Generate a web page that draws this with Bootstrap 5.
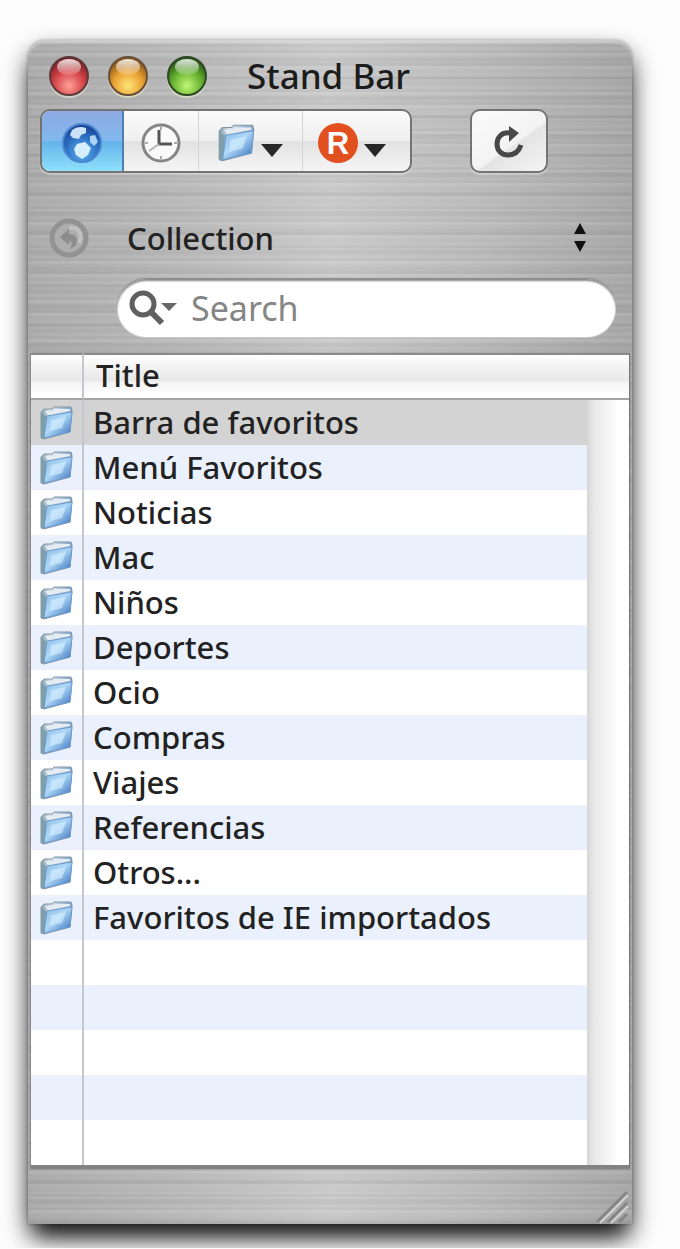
<!DOCTYPE html>
<html lang="es">
<head>
<meta charset="utf-8">
<meta name="viewport" content="width=device-width, initial-scale=1">
<title>Stand Bar</title>
<link href="https://cdn.jsdelivr.net/npm/bootstrap@5.3.0/dist/css/bootstrap.min.css" rel="stylesheet">
<style>
  body { background: #fdfdfd; font-family: "Noto Sans", "Open Sans", sans-serif; font-size: 31px; font-weight: 500; line-height: 40px; color: #222; padding: 40px 48px 24px 28px; }
  .metal {
    border-radius: 16px 16px 0 0;
    padding: 0 3px;
    background:
      repeating-linear-gradient(180deg, rgba(255,255,255,.07) 0 2px, rgba(0,0,0,.01) 4px 6px, rgba(255,255,255,.04) 9px, rgba(0,0,0,.03) 11px 13px),
      repeating-linear-gradient(180deg, rgba(0,0,0,.03) 0 1px, rgba(255,255,255,.04) 8px 17px, rgba(0,0,0,.02) 19px),
      linear-gradient(90deg, #aaa, #b8b8b8 25%, #c9c9c9 50%, #bababa 75%, #a6a6a6);
    box-shadow: inset 0 3px 3px rgba(255,255,255,.5), inset 0 0 3px rgba(0,0,0,.3), 0 0 3px rgba(0,0,0,.3), 0 12px 26px rgba(0,0,0,.6), 0 18px 22px -8px rgba(0,0,0,.8);
  }
  .titlebar { height: 69px; padding: 2px 20px 0 16px; }
  .lights { gap: 15px; margin-right: 38px; }
  .light { width: 44px; height: 44px; padding: 0; border: 0; background: none; display: block; }
  .window-title { font-size: 35px; line-height: 40px; font-weight: 500; margin: 0; color: #1c1c1c; }
  .tools { padding: 0 81px 0 9px; }
  .segments, .reload { height: 64px; border: 2px solid #747474; border-radius: 10px; overflow: hidden; box-shadow: 0 2px 1px rgba(255,255,255,.35);
    background: linear-gradient(180deg, #fafafa, #efefef 50%, #e2e2e2 51%, #f5f5f5); }
  .segments { width: 372px; }
  .segments button, .reload { padding: 4px 0 0; display: flex; align-items: center; justify-content: center; }
  .segments button { border: 0; background: none; height: 100%; }
  .segments button + button { border-left: 1px solid #d6d4d2; }
  .segments .seg-web { width: 80px; background: linear-gradient(180deg, #8fa9e3, #7fbaee 50%, #63b2ea 51%, #8fe0fb); }
  .segments .seg-history { width: 76px; border-left: 2px solid #4f7fb0; }
  .segments .seg-folder { width: 104px; gap: 4px; }
  .segments .seg-r { flex: 1; gap: 4px; padding-right: 10px; }
  .reload { width: 78px; background: linear-gradient(145deg, #fbfbfb, #f3f3f3 55%, #e4e4e4 58%, #f4f4f4); }
  .drop { margin-top: 14px; }
  .collection { height: 82px; margin-top: 24px; padding: 0 40px 0 17px; }
  .collection select { appearance: none; border: 0; background: none; padding: 0; margin-left: 37px; color: #222; font-weight: 500; }
  .search-row { padding: 0 13px 16px 86px; }
  .search { height: 58px; border-radius: 29px; background: #fff; padding: 0 24px 0 12px; box-shadow: inset 0 2px 2px #888, 0 -1px 1px #8a8a8a, 0 1px 1px #ccc; }
  .search input { border: 0; background: none; min-width: 0; flex: 1; padding: 0; margin-left: 14px; outline: 0; color: #222; font-size: 34px; line-height: 40px; }
  .search input::placeholder { color: #858585; opacity: 1; }
  .bookmarks { width: 100%; table-layout: fixed; border-collapse: separate; border-spacing: 0; background: #fff; border-bottom: 4px solid #828282; box-shadow: 1px 0 1px #777, -1px 0 1px #888; }
  .bookmarks th { height: 47px; padding: 0 0 4px 12px; font-weight: 500; line-height: 36px; border-top: 2px solid #8b8b8b; border-bottom: 2px solid #a5a5a5; background: linear-gradient(180deg, #fff, #f0f0f0 35%, #e8e8e8 60%, #f3f3f3 62%, #fff 95%); }
  .bookmarks td { height: 45px; padding: 0 0 2px; line-height: 40px; }
  .bookmarks .icon-col { border-right: 2px solid #c4c8cc; padding: 0 0 0 9px; }
  .bookmarks .name { padding-left: 9px; }
  .bookmarks tbody tr:nth-child(even) td { background: #eaf1fc; }
  .bookmarks tbody tr.chosen td { background: #d3d3d3; }
  .bookmarks td svg { display: block; }
  .bookmarks tbody tr td.track { background: linear-gradient(90deg, #d5d5d5, #e7e7e7 15%, #f3f3f3 45%, #fff 75%); }
  .bookmarks .icon-width { width: 53px; }
  .bookmarks .track-width { width: 42px; }
  .statusbar { height: 55px; }
</style>
</head>
<body>
<svg width="0" height="0" class="position-absolute" aria-hidden="true">
  <defs>
    <linearGradient id="gFront" x1="0" y1="0" x2="1" y2="1"><stop offset="0" stop-color="#8dbbe6"/><stop offset=".45" stop-color="#aed8f8"/><stop offset="1" stop-color="#2f66b5"/></linearGradient>
    <linearGradient id="gBack" x1="0" y1="0" x2="1" y2="0"><stop offset="0" stop-color="#7f9fae"/><stop offset=".3" stop-color="#dbe5ec"/><stop offset="1" stop-color="#7ba2cb"/></linearGradient>
    <radialGradient id="gGlobe" cx=".5" cy=".75" r=".75"><stop offset="0" stop-color="#62b5f0"/><stop offset=".55" stop-color="#2d71c4"/><stop offset="1" stop-color="#173f92"/></radialGradient>
    <radialGradient id="gRed" cx=".5" cy=".75" r=".75"><stop offset="0" stop-color="#ffa199"/><stop offset=".5" stop-color="#d8474b"/><stop offset="1" stop-color="#6d1519"/></radialGradient>
    <radialGradient id="gAmber" cx=".5" cy=".75" r=".75"><stop offset="0" stop-color="#ffe678"/><stop offset=".5" stop-color="#eba333"/><stop offset="1" stop-color="#784510"/></radialGradient>
    <radialGradient id="gGreen" cx=".5" cy=".75" r=".75"><stop offset="0" stop-color="#c4f778"/><stop offset=".5" stop-color="#68b430"/><stop offset="1" stop-color="#1c4b0e"/></radialGradient>
    <linearGradient id="gShine" x1="0" y1="0" x2="0" y2="1"><stop offset="0" stop-color="#fff" stop-opacity=".85"/><stop offset="1" stop-color="#fff" stop-opacity=".15"/></linearGradient>
    <symbol id="folder" viewBox="0 0 34 36">
      <path d="M1 7 L4 4 L12 4 L14 2 L31 2 L32 5 L30 27 L4 34 L1 33 Z" fill="url(#gBack)" stroke="#8397a8"/>
      <path d="M1 8 L6 11 L5 33 L1 33 Z" fill="#7e9faa"/>
      <path d="M7 11 L32 7 L30 27 L4 33 Z" fill="url(#gFront)" stroke="#6d9bcb"/>
      <path d="M11 15 L26 12 L22 23 L10 26 Z" fill="#d8f0ff" opacity=".6"/>
      <path d="M5 6 L13 6 L15 4 L30 4 L30 6 L8 10 Z" fill="#e6edf2"/>
    </symbol>
  </defs>
</svg>

<main class="metal">
  <header class="titlebar d-flex align-items-center">
    <div class="lights d-flex">
      <button class="light" type="button" aria-label="Close"><svg class="d-block" width="44" height="44" viewBox="0 0 44 44"><circle cx="22" cy="24" r="20" fill="#f4f0df" opacity=".55"/><circle cx="22" cy="22" r="19" fill="url(#gRed)" stroke="#5d3a3a" stroke-width="2"/><ellipse cx="22" cy="13" rx="12" ry="8" fill="url(#gShine)"/></svg></button>
      <button class="light" type="button" aria-label="Minimize"><svg class="d-block" width="44" height="44" viewBox="0 0 44 44"><circle cx="22" cy="24" r="20" fill="#f8f2c8" opacity=".55"/><circle cx="22" cy="22" r="19" fill="url(#gAmber)" stroke="#67503a" stroke-width="2"/><ellipse cx="22" cy="13" rx="12" ry="8" fill="url(#gShine)"/></svg></button>
      <button class="light" type="button" aria-label="Zoom"><svg class="d-block" width="44" height="44" viewBox="0 0 44 44"><circle cx="22" cy="24" r="20" fill="#eaf8cc" opacity=".55"/><circle cx="22" cy="22" r="19" fill="url(#gGreen)" stroke="#304728" stroke-width="2"/><ellipse cx="22" cy="13" rx="12" ry="8" fill="url(#gShine)"/></svg></button>
    </div>
    <h1 class="window-title">Stand Bar</h1>
  </header>

  <div class="tools d-flex justify-content-between">
    <div class="segments d-flex" role="group" aria-label="View">
      <button class="seg-web" type="button" aria-label="Web">
        <svg width="42" height="42" viewBox="0 0 42 42"><circle cx="21" cy="21" r="19" fill="url(#gGlobe)" stroke="#4c86cf" stroke-width="2"/><path d="M11 8 Q17 3 25 6 L25 11 L20 13 L18 17 L12 16 L9 13 Z" fill="#c9e2f7"/><path d="M29 14 L34 13 L37 20 L33 24 L29 20 Z" fill="#a9d3f5"/><path d="M16 22 L24 20 L30 26 L27 33 L21 37 L15 33 L13 27 Z" fill="#d5efff"/></svg>
      </button>
      <button class="seg-history" type="button" aria-label="History">
        <svg width="42" height="42" viewBox="0 0 42 42" fill="none"><circle cx="21" cy="21" r="18" fill="#fafafa" stroke="#858585" stroke-width="3"/><path d="M19 8 V22 H32" stroke="#555" stroke-width="3"/><path d="M19 22 L9 29" stroke="#b5b5b5" stroke-width="2"/><path d="M21 5v3M21 34v3M5 21h3M34 21h3" stroke="#aaa" stroke-width="2"/></svg>
      </button>
      <button class="seg-folder" type="button" aria-label="Folders">
        <svg width="38" height="40"><use href="#folder"/></svg>
        <svg class="drop" width="24" height="14" viewBox="0 0 24 14"><path d="M1 1 H23 L12 14 Z" fill="#272727"/></svg>
      </button>
      <button class="seg-r" type="button" aria-label="R">
        <svg width="42" height="42" viewBox="0 0 42 42"><circle cx="21" cy="21" r="20" fill="#e2501f"/><text x="21" y="32" text-anchor="middle" font-family="Liberation Sans, sans-serif" font-weight="700" font-size="31" fill="#fff">R</text></svg>
        <svg class="drop" width="24" height="14" viewBox="0 0 24 14"><path d="M1 1 H23 L12 14 Z" fill="#272727"/></svg>
      </button>
    </div>
    <button class="reload" type="button" aria-label="Reload">
      <svg width="34" height="36" viewBox="0 0 34 36"><path d="M18 8 C10 7 5 12 5 19 C5 26 10 30 16 30 C23 30 27 26 29 20" fill="none" stroke="#484848" stroke-width="5"/><path d="M17 1 L27 8 L17 17 Z" fill="#484848"/></svg>
    </button>
  </div>

  <div class="collection d-flex align-items-center">
    <svg width="42" height="42" viewBox="0 0 42 42" aria-hidden="true"><circle cx="21" cy="21" r="17" fill="#adadad" stroke="#929292" stroke-width="5"/><path d="M12 20 L21 12 V17 C29 17 31 24 27 29 L22 32 C25 27 24 24 21 24 V28 Z" fill="#8c8c8c"/><path d="M21 11 C30 9 35 17 31 26" fill="none" stroke="#c0c0c0" stroke-width="4"/></svg>
    <select class="flex-grow-1" aria-label="Collection"><option>Collection</option></select>
    <svg width="18" height="32" viewBox="0 0 18 32" aria-hidden="true"><path d="M9 1 L15 12 H3 Z M3 19 H15 L9 30 Z" fill="#111"/></svg>
  </div>

  <div class="search-row">
    <div class="search d-flex align-items-center">
      <svg width="48" height="38" viewBox="0 0 48 38" aria-hidden="true"><circle cx="14" cy="15" r="11" fill="none" stroke="#606060" stroke-width="5"/><path d="M22 23 L33 34" stroke="#606060" stroke-width="6"/><path d="M32 14 H48 L40 22 Z" fill="#686868"/></svg>
      <input type="search" placeholder="Search" aria-label="Search">
    </div>
  </div>

  <table class="bookmarks">
    <colgroup><col class="icon-width"><col><col class="track-width"></colgroup>
    <thead><tr><th class="icon-col" aria-label="Icon"></th><th colspan="2">Title</th></tr></thead>
    <tbody>
      <tr class="chosen"><td class="icon-col"><svg width="34" height="36"><use href="#folder"/></svg></td><td class="name">Barra de favoritos</td><td class="track" rowspan="17"></td></tr>
      <tr><td class="icon-col"><svg width="34" height="36"><use href="#folder"/></svg></td><td class="name">Menú Favoritos</td></tr>
      <tr><td class="icon-col"><svg width="34" height="36"><use href="#folder"/></svg></td><td class="name">Noticias</td></tr>
      <tr><td class="icon-col"><svg width="34" height="36"><use href="#folder"/></svg></td><td class="name">Mac</td></tr>
      <tr><td class="icon-col"><svg width="34" height="36"><use href="#folder"/></svg></td><td class="name">Niños</td></tr>
      <tr><td class="icon-col"><svg width="34" height="36"><use href="#folder"/></svg></td><td class="name">Deportes</td></tr>
      <tr><td class="icon-col"><svg width="34" height="36"><use href="#folder"/></svg></td><td class="name">Ocio</td></tr>
      <tr><td class="icon-col"><svg width="34" height="36"><use href="#folder"/></svg></td><td class="name">Compras</td></tr>
      <tr><td class="icon-col"><svg width="34" height="36"><use href="#folder"/></svg></td><td class="name">Viajes</td></tr>
      <tr><td class="icon-col"><svg width="34" height="36"><use href="#folder"/></svg></td><td class="name">Referencias</td></tr>
      <tr><td class="icon-col"><svg width="34" height="36"><use href="#folder"/></svg></td><td class="name">Otros...</td></tr>
      <tr><td class="icon-col"><svg width="34" height="36"><use href="#folder"/></svg></td><td class="name">Favoritos de IE importados</td></tr>
      <tr><td class="icon-col"></td><td></td></tr>
      <tr><td class="icon-col"></td><td></td></tr>
      <tr><td class="icon-col"></td><td></td></tr>
      <tr><td class="icon-col"></td><td></td></tr>
      <tr><td class="icon-col"></td><td></td></tr>
    </tbody>
  </table>

  <footer class="statusbar d-flex justify-content-end align-items-end">
    <svg width="34" height="36" viewBox="0 0 34 36" aria-hidden="true"><path d="M2 34 L32 4 M13 34 L32 15 M24 34 L32 26" stroke="#858585" stroke-width="3"/><path d="M5 35 L33 7 M16 35 L33 18" stroke="#d2d2d2" stroke-width="2"/></svg>
  </footer>
</main>
<script src="https://cdn.jsdelivr.net/npm/bootstrap@5.3.0/dist/js/bootstrap.bundle.min.js"></script>
</body>
</html>
